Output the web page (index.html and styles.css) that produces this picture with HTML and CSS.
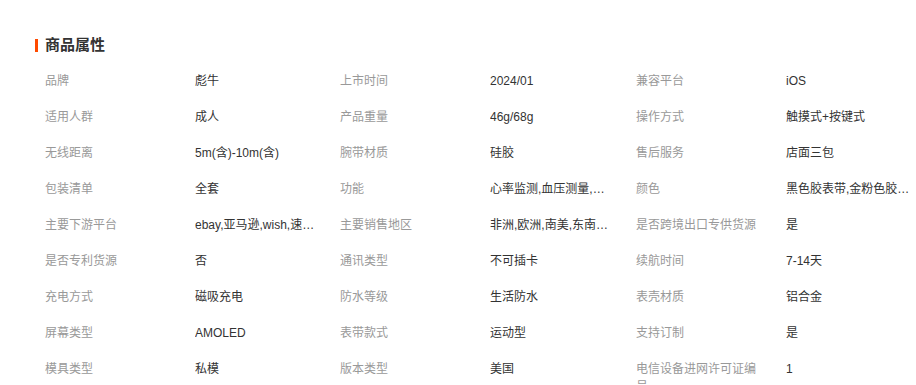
FILE: index.html
```html
<!DOCTYPE html>
<html lang="zh">
<head>
<meta charset="utf-8">
<title>商品属性</title>
<link rel="stylesheet" href="styles.css">
</head>
<body>
<section class="attrs">
  <h2 class="attrs-title"><span class="bar"></span>商品属性</h2>
  <div class="grid">
    <div class="k">品牌</div><div class="v">彪牛</div>
    <div class="k">上市时间</div><div class="v">2024/01</div>
    <div class="k">兼容平台</div><div class="v">iOS</div>

    <div class="k">适用人群</div><div class="v">成人</div>
    <div class="k">产品重量</div><div class="v">46g/68g</div>
    <div class="k">操作方式</div><div class="v">触摸式+按键式</div>

    <div class="k">无线距离</div><div class="v">5m(含)-10m(含)</div>
    <div class="k">腕带材质</div><div class="v">硅胶</div>
    <div class="k">售后服务</div><div class="v">店面三包</div>

    <div class="k">包装清单</div><div class="v">全套</div>
    <div class="k">功能</div><div class="v">心率监测,血压测量,蓝牙通话,消息提醒</div>
    <div class="k">颜色</div><div class="v">黑色胶表带,金粉色胶表带,银色胶表带</div>

    <div class="k">主要下游平台</div><div class="v">ebay,亚马逊,wish,速卖通,独立站</div>
    <div class="k">主要销售地区</div><div class="v">非洲,欧洲,南美,东南亚,北美</div>
    <div class="k">是否跨境出口专供货源</div><div class="v">是</div>

    <div class="k">是否专利货源</div><div class="v">否</div>
    <div class="k">通讯类型</div><div class="v">不可插卡</div>
    <div class="k">续航时间</div><div class="v">7-14天</div>

    <div class="k">充电方式</div><div class="v">磁吸充电</div>
    <div class="k">防水等级</div><div class="v">生活防水</div>
    <div class="k">表壳材质</div><div class="v">铝合金</div>

    <div class="k">屏幕类型</div><div class="v">AMOLED</div>
    <div class="k">表带款式</div><div class="v">运动型</div>
    <div class="k">支持订制</div><div class="v">是</div>

    <div class="k">模具类型</div><div class="v">私模</div>
    <div class="k">版本类型</div><div class="v">美国</div>
    <div class="k">电信设备进网许可证编号</div><div class="v">1</div>
  </div>
</section>
</body>
</html>
```

FILE: styles.css
```css
html, body {
  margin: 0;
  padding: 0;
  background: #fff;
}
body {
  font-family: "Liberation Sans", "Noto Sans CJK SC", sans-serif;
  font-size: 12px;
  color: #333;
}
.attrs {
  padding: 36px 0 0 35px;
}
.attrs-title {
  display: flex;
  align-items: center;
  margin: 0 0 9px 0;
  height: 18px;
  font-size: 15px;
  line-height: 18px;
  font-weight: bold;
  color: #333;
}
.bar {
  display: inline-block;
  width: 3px;
  height: 13px;
  background: #ff4a00;
  margin-right: 7px;
}
.grid {
  display: grid;
  grid-template-columns: 150px 145px 150px 146px 150px 1fr;
  margin-left: 10px;
  grid-auto-rows: minmax(36px, auto);
}
.k, .v {
  padding: 9px 0;
  line-height: 18px;
}
.k {
  color: #999;
  width: 126px;
}
.v {
  color: #333;
  max-width: 125px;
  white-space: nowrap;
  overflow: hidden;
  text-overflow: ellipsis;
}
```
